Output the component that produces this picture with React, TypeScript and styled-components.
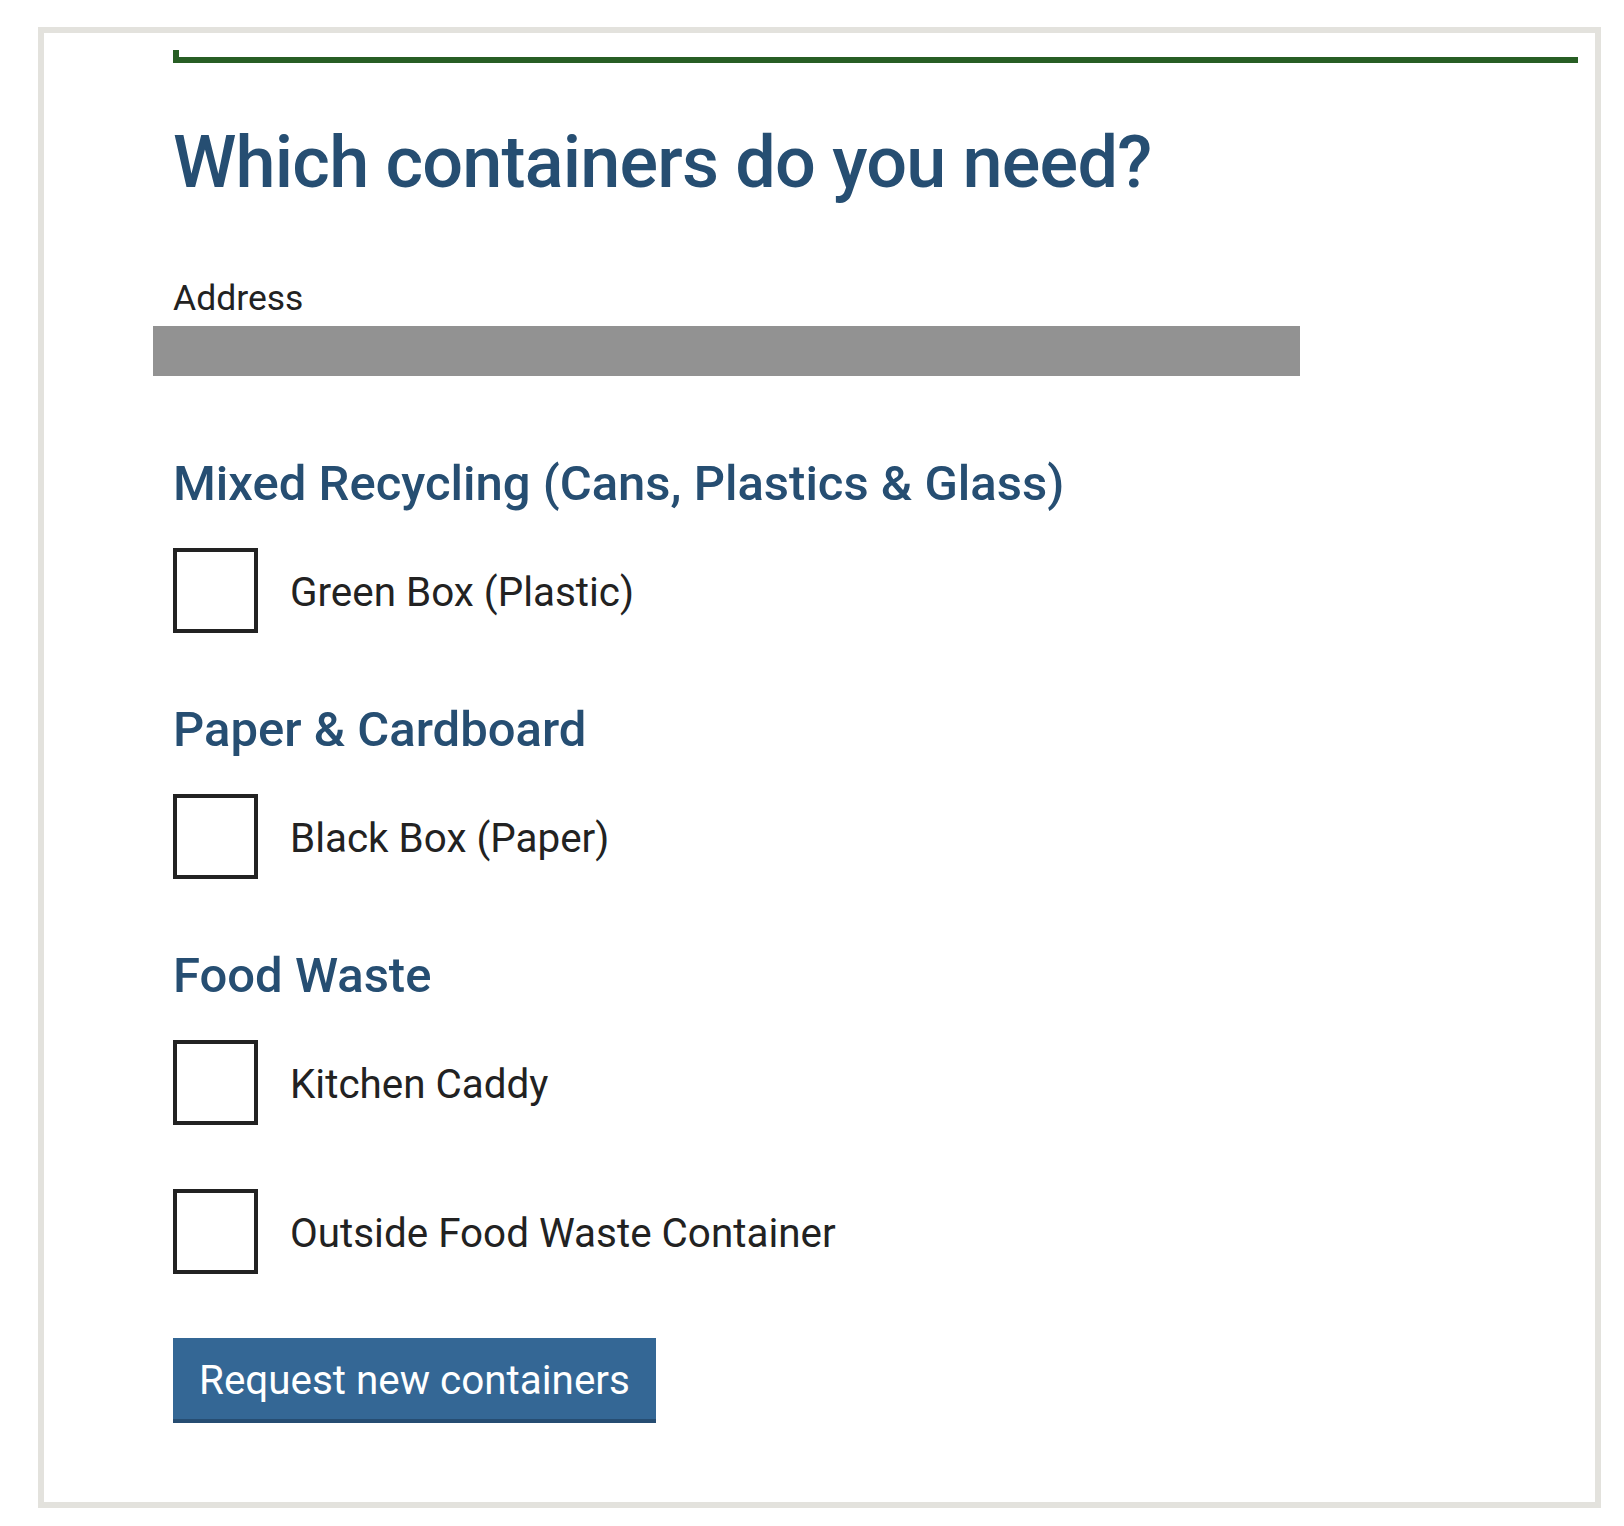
import React from "react";
import styled, { createGlobalStyle } from "styled-components";

const GlobalStyle = createGlobalStyle`
  html, body {
    margin: 0;
    padding: 0;
    background: #ffffff;
  }
  body {
    font-family: Roboto, "Liberation Sans", Arial, sans-serif;
    color: #222222;
  }
  * { box-sizing: border-box; }
`;

const Frame = styled.div`
  margin: 27px 0 18px 38px;
  width: 1563px;
  border: 6px solid #e3e2dd;
  padding: 17px 17px 79px 129px;
  background: #ffffff;
`;

const TopRule = styled.div`
  height: 13px;
  border-left: 6px solid #275e24;
  border-bottom: 6px solid #275e24;
`;

const Title = styled.h1`
  margin: 57px 0 0;
  font-size: 72px;
  line-height: 86px;
  font-weight: 500;
  letter-spacing: -0.8px;
  color: #264e72;
`;

const FieldLabel = styled.div`
  margin-top: 72px;
  font-size: 35.5px;
  line-height: 40px;
  color: #222222;
`;

const AddressBar = styled.div`
  margin: 8px 0 0 -20px;
  width: 1147px;
  height: 50px;
  background: #929292;
`;

const Sections = styled.div`
  margin-top: 80px;
  display: flex;
  flex-direction: column;
  gap: 69px;
`;

const Section = styled.section`
  display: flex;
  flex-direction: column;
`;

const SectionTitle = styled.h2`
  margin: 0;
  font-size: 49px;
  line-height: 56px;
  font-weight: 500;
  color: #264e72;
`;

const Options = styled.div`
  margin-top: 36px;
  display: flex;
  flex-direction: column;
  gap: 64px;
`;

const OptionRow = styled.label`
  display: flex;
  align-items: center;
  gap: 32px;
  cursor: pointer;
`;

const Box = styled.span`
  flex: none;
  width: 85px;
  height: 85px;
  border: 4px solid #222222;
  background: #ffffff;
`;

const OptionText = styled.span`
  margin-top: 3px;
  font-size: 40.4px;
  line-height: 47px;
  color: #222222;
`;

const SubmitButton = styled.button`
  align-self: flex-start;
  margin-top: 64px;
  height: 85px;
  padding: 3px 26px 0;
  border: none;
  border-bottom: 4px solid #264d72;
  background: #346795;
  color: #ffffff;
  font-family: Roboto, "Liberation Sans", Arial, sans-serif;
  font-size: 40.4px;
  line-height: 47px;
  cursor: pointer;
`;

const Form = styled.div`
  display: flex;
  flex-direction: column;
`;

const sections = [
  { title: "Mixed Recycling (Cans, Plastics & Glass)", options: ["Green Box (Plastic)"] },
  { title: "Paper & Cardboard", options: ["Black Box (Paper)"] },
  { title: "Food Waste", options: ["Kitchen Caddy", "Outside Food Waste Container"] },
];

export default function App() {
  return (
    <>
      <GlobalStyle />
      <Frame>
        <Form>
          <TopRule />
          <Title>Which containers do you need?</Title>
          <FieldLabel>Address</FieldLabel>
          <AddressBar />
          <Sections>
            {sections.map((s) => (
              <Section key={s.title}>
                <SectionTitle>{s.title}</SectionTitle>
                <Options>
                  {s.options.map((o) => (
                    <OptionRow key={o}>
                      <Box />
                      <OptionText>{o}</OptionText>
                    </OptionRow>
                  ))}
                </Options>
              </Section>
            ))}
          </Sections>
          <SubmitButton>Request new containers</SubmitButton>
        </Form>
      </Frame>
    </>
  );
}
